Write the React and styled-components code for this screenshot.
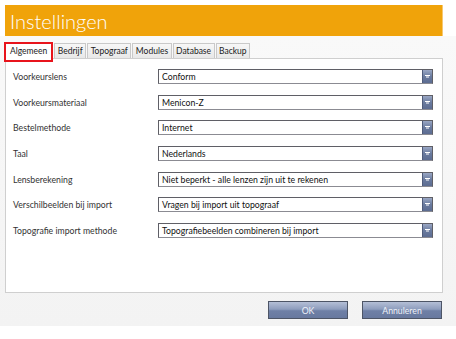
import React from 'react'
import styled, { createGlobalStyle } from 'styled-components'

const Global = createGlobalStyle`
  html, body { margin: 0; padding: 0; background: #fff; }
  body { font-family: "Segoe UI", Lato, "Liberation Sans", sans-serif; }
`

const Page = styled.div`
  width: 456px;
  height: 339px;
  background: #fff;
  overflow: hidden;
`

const HeaderRow = styled.div`
  padding: 5px 13px 0 5px;
  background: #fff;
`

const Header = styled.div`
  height: 31px;
  background: #f0a30a;
  border-right: 1px solid #f7c870;
  display: flex;
  align-items: center;
  padding-left: 5px;
  color: #fff;
  font-family: Lato, "Open Sans", sans-serif;
  font-weight: 300;
  font-size: 20px;
`

const Body = styled.div`
  background: linear-gradient(#f9f9f9, #f3f3f3);
  padding: 7px 13px 0 5px;
  height: 290px;
  box-sizing: border-box;
`

const Tabs = styled.div`
  display: flex;
  align-items: flex-end;
  height: 15px;
  position: relative;
  z-index: 1;
`

const Tab = styled.div`
  height: 15px;
  box-sizing: border-box;
  padding: 0 2.5px;
  font-size: 8.5px;
  line-height: 14px;
  color: #222;
  border: 1px solid #c9c9c9;
  border-bottom: none;
  margin-right: 1px;
  background: ${p => (p.$active ? '#fff' : 'linear-gradient(#f7f7f7, #e8e8e8)')};
  position: relative;
  ${p => p.$active && `
    padding: 0 4px;
    margin-right: 2px;
    height: 16px;
    margin-bottom: -1px;
    &::after {
      content: '';
      position: absolute;
      left: -2px; right: -2px; top: -2px; bottom: -3px;
      border: 2px solid #e8141c;
    }
  `}
`

const Panel = styled.div`
  background: #fff;
  border: 1px solid #cfcfcf;
  height: 235px;
  box-sizing: border-box;
  padding: 10px 9px 0 6px;
`

const Form = styled.div`
  display: grid;
  grid-template-columns: 146px 1fr;
  row-gap: 10.7px;
  align-items: center;
`

const Label = styled.div`
  font-size: 8.7px;
  color: #333;
  padding-left: 1px;
`

const Select = styled.div`
  height: 15px;
  box-sizing: border-box;
  border: 1px solid #5f5f66;
  border-bottom-color: #8b8b92;
  background: #fff;
  display: flex;
  align-items: stretch;
`

const SelectText = styled.div`
  flex: 1;
  font-size: 8.7px;
  line-height: 13px;
  padding-left: 3px;
  color: #111;
`

const Arrow = styled.div`
  width: 9px;
  background: linear-gradient(#9aa7c4, #6a7b9f 50%, #5c6c91);
  border-left: 1px solid #4e5b7a;
  display: flex;
  align-items: center;
  justify-content: center;
`

const Footer = styled.div`
  display: flex;
  justify-content: flex-end;
  gap: 14px;
  padding: 8px 1px 0 0;
`

const Button = styled.button`
  width: 80px;
  height: 18px;
  border: 1px solid #4d5566;
  background: linear-gradient(#b4bfd6, #8e9dbd 45%, #6f80a6 55%, #68799f);
  color: #eef1f8;
  font-family: Lato, "Liberation Sans", sans-serif;
  font-size: 8.7px;
  padding: 0;
`

const rows = [
  ['Voorkeurslens', 'Conform'],
  ['Voorkeursmateriaal', 'Menicon-Z'],
  ['Bestelmethode', 'Internet'],
  ['Taal', 'Nederlands'],
  ['Lensberekening', 'Niet beperkt - alle lenzen zijn uit te rekenen'],
  ['Verschilbeelden bij import', 'Vragen bij import uit topograaf'],
  ['Topografie import methode', 'Topografiebeelden combineren bij import'],
]

const tabs = ['Algemeen', 'Bedrijf', 'Topograaf', 'Modules', 'Database', 'Backup']

export default function App() {
  return (
    <Page>
      <Global />
      <HeaderRow>
        <Header>Instellingen</Header>
      </HeaderRow>
      <Body>
        <Tabs>
          {tabs.map((t, i) => (
            <Tab key={t} $active={i === 0}>{t}</Tab>
          ))}
        </Tabs>
        <Panel>
          <Form>
            {rows.map(([label, value]) => (
              <React.Fragment key={label}>
                <Label>{label}</Label>
                <Select>
                  <SelectText>{value}</SelectText>
                  <Arrow>
                    <svg width="5" height="3" viewBox="0 0 5 3">
                      <path d="M0 0.5h5M1 2h3" stroke="#fff" strokeWidth="1" />
                    </svg>
                  </Arrow>
                </Select>
              </React.Fragment>
            ))}
          </Form>
        </Panel>
        <Footer>
          <Button>OK</Button>
          <Button>Annuleren</Button>
        </Footer>
      </Body>
    </Page>
  )
}
